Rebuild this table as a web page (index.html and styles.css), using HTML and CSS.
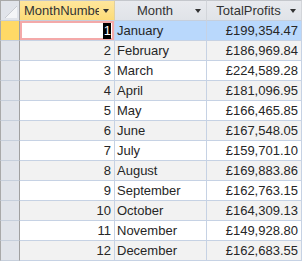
FILE: index.html
```html
<!DOCTYPE html>
<html lang="en">
<head>
    <meta charset="utf-8">
    <title>MonthlyProfits</title>
    <link rel="stylesheet" href="styles.css">
</head>
<body>
    <div class="sheet">
        <div class="corner">
            <svg width="18" height="19" viewBox="0 0 18 19"><polygon points="4,17 16,5 16,17" fill="#f4f5f7"/><line x1="4" y1="17" x2="16" y2="5" stroke="#c9ccd2"/></svg>
        </div>
        <div class="head head-sel"><span class="caption">MonthNumber</span><span class="arrow"></span></div>
        <div class="head"><span class="caption">Month</span><span class="arrow"></span></div>
        <div class="head"><span class="caption">TotalProfits</span><span class="arrow"></span></div>

        <div class="sel sel-cur"></div>
        <div class="cell num focus"><span class="hl">1</span></div>
        <div class="cell cur">January</div>
        <div class="cell num cur">£199,354.47</div>

        <div class="sel alt"></div>
        <div class="cell num alt">2</div>
        <div class="cell alt">February</div>
        <div class="cell num alt">£186,969.84</div>

        <div class="sel"></div>
        <div class="cell num">3</div>
        <div class="cell">March</div>
        <div class="cell num">£224,589.28</div>

        <div class="sel alt"></div>
        <div class="cell num alt">4</div>
        <div class="cell alt">April</div>
        <div class="cell num alt">£181,096.95</div>

        <div class="sel"></div>
        <div class="cell num">5</div>
        <div class="cell">May</div>
        <div class="cell num">£166,465.85</div>

        <div class="sel alt"></div>
        <div class="cell num alt">6</div>
        <div class="cell alt">June</div>
        <div class="cell num alt">£167,548.05</div>

        <div class="sel"></div>
        <div class="cell num">7</div>
        <div class="cell">July</div>
        <div class="cell num">£159,701.10</div>

        <div class="sel alt"></div>
        <div class="cell num alt">8</div>
        <div class="cell alt">August</div>
        <div class="cell num alt">£169,883.86</div>

        <div class="sel"></div>
        <div class="cell num">9</div>
        <div class="cell">September</div>
        <div class="cell num">£162,763.15</div>

        <div class="sel alt"></div>
        <div class="cell num alt">10</div>
        <div class="cell alt">October</div>
        <div class="cell num alt">£164,309.13</div>

        <div class="sel"></div>
        <div class="cell num">11</div>
        <div class="cell">November</div>
        <div class="cell num">£149,928.80</div>

        <div class="sel alt"></div>
        <div class="cell num alt">12</div>
        <div class="cell alt">December</div>
        <div class="cell num alt">£162,683.55</div>
    </div>
</body>
</html>
```

FILE: styles.css
```css
body {
    margin: 0;
    background-color: #fff;
}

.sheet {
    display: grid;
    grid-template-columns: 20px 95px 92px 95px;
    grid-auto-rows: 20px;
    grid-template-rows: 21px;
    font-family: "Liberation Sans", Arial, sans-serif;
    font-size: 13px;
    color: #262626;
}

.sheet > div {
    box-sizing: border-box;
    white-space: nowrap;
    overflow: hidden;
}

.corner {
    background-color: #e1e4ea;
    border-top: 1px solid #a9a9a9;
    border-left: 1px solid #a9a9a9;
    border-right: 1px solid #a0a0a0;
    border-bottom: 1px solid #c6cfdc;
}

.corner svg {
    display: block;
}

.head {
    display: flex;
    align-items: center;
    background: linear-gradient(#e8eaee, #e0e3e8);
    border-top: 1px solid #c4c7cc;
    border-right: 1px solid #d2d5da;
    border-bottom: 1px solid #c6cfdc;
    color: #333;
}

.head-sel {
    background: linear-gradient(#ffe69c, #fcdc78);
    border-right-color: #e0d0a0;
}

.caption {
    flex: 1;
    overflow: hidden;
    text-align: center;
    padding-left: 4px;
    line-height: 19px;
}

.arrow {
    width: 0;
    height: 0;
    margin: 1px 5px 0 4px;
    border-left: 3.5px solid transparent;
    border-right: 3.5px solid transparent;
    border-top: 4px solid #333;
}

.sel {
    background-color: #e1e4ea;
    border-left: 1px solid #a9a9a9;
    border-right: 1px solid #a0a0a0;
    border-bottom: 1px solid #c6cfdc;
}

.sel-cur {
    background-color: #ffd966;
}

.cell {
    padding: 0 3px 0 2px;
    line-height: 19px;
    border-right: 1px solid #c6d2e4;
    border-bottom: 1px solid #c6d2e4;
}

.num {
    text-align: right;
}

.alt.cell {
    background-color: #f2f2f2;
}

.cur {
    background-color: #b9d8fc;
}

.focus {
    background-color: #fff;
    box-shadow: inset 0 0 0 2px #f4a9a9;
}

.hl {
    display: inline-block;
    background-color: #000;
    color: #fff;
    line-height: 16px;
    padding: 0 0 0 1px;
}
```
